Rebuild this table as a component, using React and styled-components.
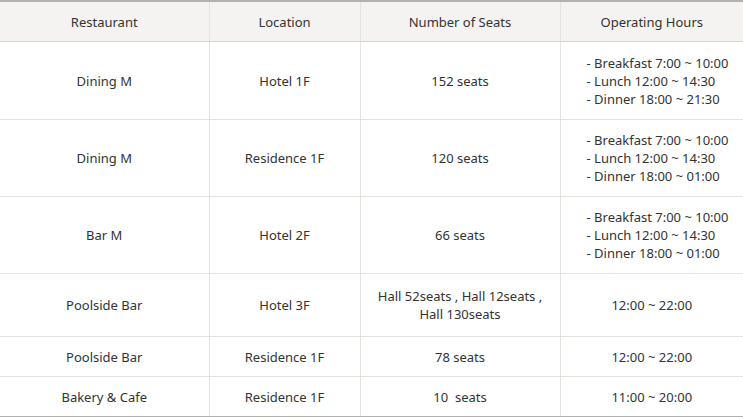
import React from "react";
import styled, { createGlobalStyle } from "styled-components";

const Global = createGlobalStyle`
  html, body { margin: 0; padding: 0; background: #fff; }
  body { font-family: "Noto Sans", "Open Sans", sans-serif; }
`;

const Table = styled.table`
  width: 743px;
  border-collapse: collapse;
  table-layout: fixed;
  border-top: 2px solid #b4b1ad;
  border-bottom: 2px solid #b4b1ad;
  font-size: 13px;
  color: #333;
`;

const Th = styled.th`
  height: 39px;
  padding: 0;
  font-weight: 400;
  background: #f4f3f1;
  border-bottom: 1px solid #d9d6d1;
  border-left: 1px solid #e6e3de;
  text-align: center;
  &:first-child { border-left: none; }
`;

const Td = styled.td`
  height: ${(p) => p.$h}px;
  padding: 0;
  text-align: center;
  vertical-align: middle;
  border-top: 1px solid #e6e3de;
  border-left: 1px solid #e6e3de;
  line-height: 18px;
  &:first-child { border-left: none; }
`;

const Hours = styled.div`
  text-align: left;
  padding-left: 26px;
`;

const Seats = styled.span`
  white-space: pre;
`;

const rows = [
  { h: 77, name: "Dining M", loc: "Hotel 1F", seats: "152 seats", hours: ["- Breakfast 7:00 ~ 10:00", "- Lunch 12:00 ~ 14:30", "- Dinner 18:00 ~ 21:30"] },
  { h: 76, name: "Dining M", loc: "Residence 1F", seats: "120 seats", hours: ["- Breakfast 7:00 ~ 10:00", "- Lunch 12:00 ~ 14:30", "- Dinner 18:00 ~ 01:00"] },
  { h: 76, name: "Bar M", loc: "Hotel 2F", seats: "66 seats", hours: ["- Breakfast 7:00 ~ 10:00", "- Lunch 12:00 ~ 14:30", "- Dinner 18:00 ~ 01:00"] },
  { h: 62, name: "Poolside Bar", loc: "Hotel 3F", seats: ["Hall 52seats , Hall 12seats ,", "Hall 130seats"], hours: "12:00 ~ 22:00" },
  { h: 39, name: "Poolside Bar", loc: "Residence 1F", seats: "78 seats", hours: "12:00 ~ 22:00" },
  { h: 39, name: "Bakery & Cafe", loc: "Residence 1F", seats: "10  seats", hours: "11:00 ~ 20:00" },
];

export default function App() {
  return (
    <>
      <Global />
      <Table>
        <colgroup>
          <col style={{ width: 209 }} />
          <col style={{ width: 151 }} />
          <col style={{ width: 200 }} />
          <col style={{ width: 183 }} />
        </colgroup>
        <thead>
          <tr>
            <Th>Restaurant</Th>
            <Th>Location</Th>
            <Th>Number of Seats</Th>
            <Th>Operating Hours</Th>
          </tr>
        </thead>
        <tbody>
          {rows.map((r, i) => (
            <tr key={i}>
              <Td $h={r.h}>{r.name}</Td>
              <Td $h={r.h}>{r.loc}</Td>
              <Td $h={r.h}>
                {Array.isArray(r.seats)
                  ? r.seats.map((s, j) => <div key={j}>{s}</div>)
                  : <Seats>{r.seats}</Seats>}
              </Td>
              <Td $h={r.h}>
                {Array.isArray(r.hours) ? (
                  <Hours>
                    {r.hours.map((s, j) => <div key={j}>{s}</div>)}
                  </Hours>
                ) : (
                  r.hours
                )}
              </Td>
            </tr>
          ))}
        </tbody>
      </Table>
    </>
  );
}
